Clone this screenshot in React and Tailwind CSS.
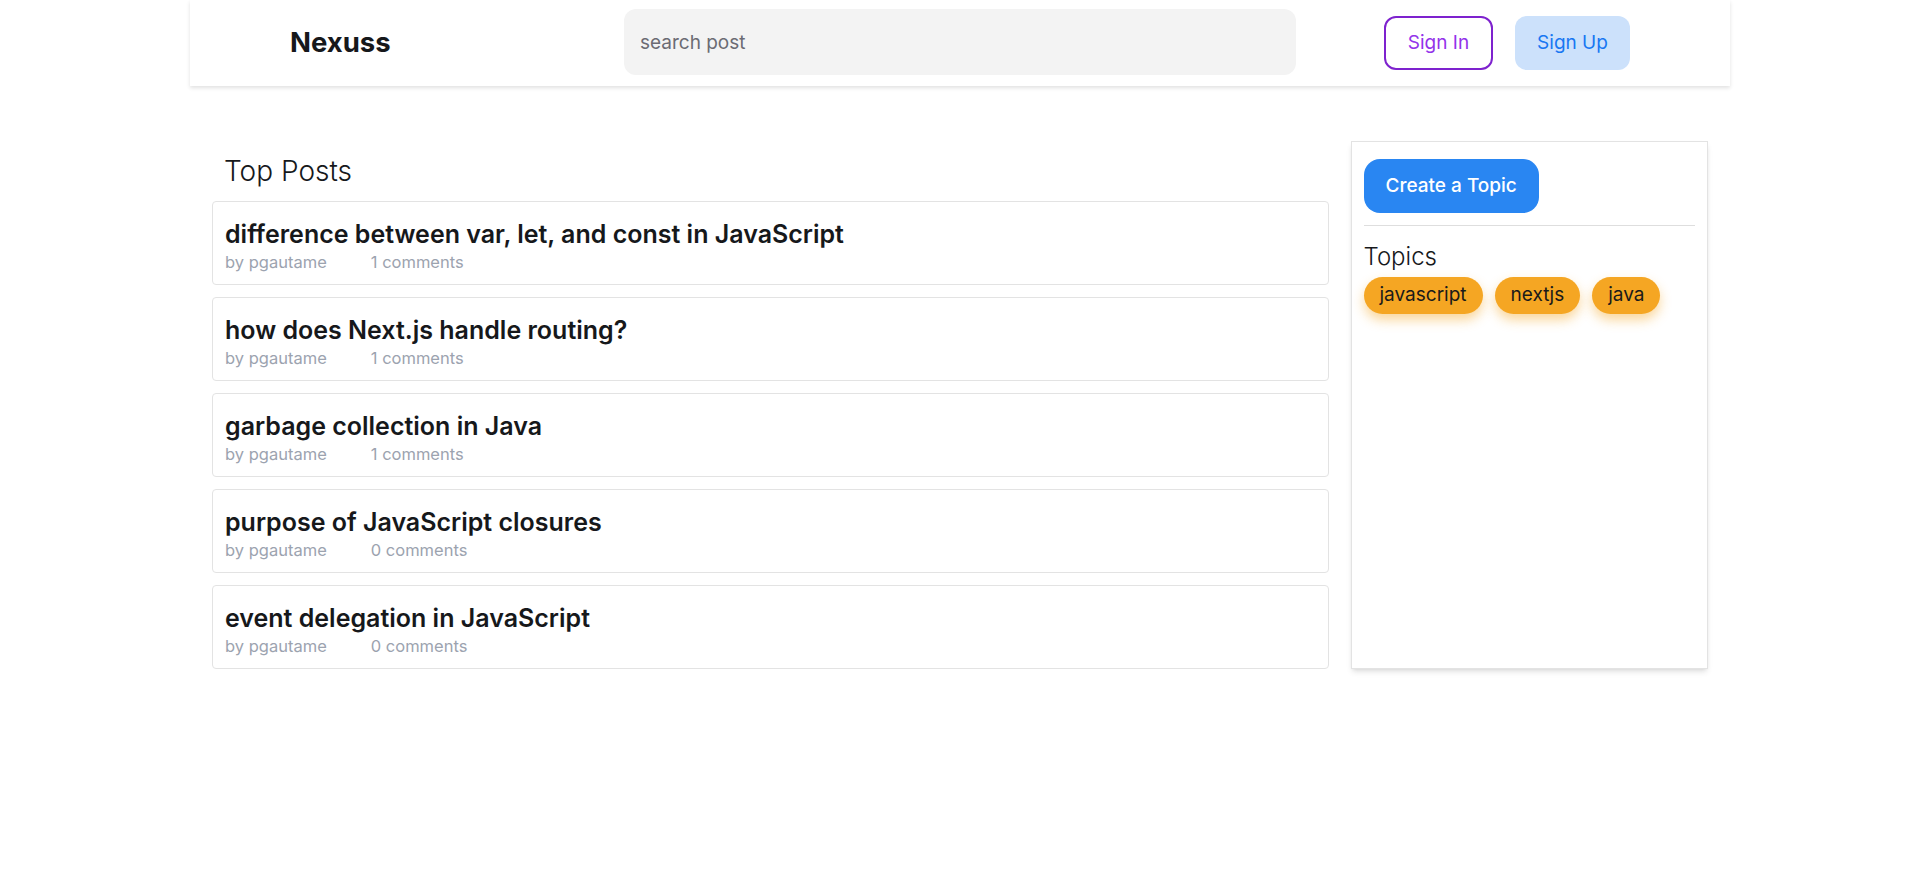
import React from 'react'

const posts = [
  { title: 'difference between var, let, and const in JavaScript', author: 'pgautame', comments: 1 },
  { title: 'how does Next.js handle routing?', author: 'pgautame', comments: 1 },
  { title: 'garbage collection in Java', author: 'pgautame', comments: 1 },
  { title: 'purpose of JavaScript closures', author: 'pgautame', comments: 0 },
  { title: 'event delegation in JavaScript', author: 'pgautame', comments: 0 },
]

const topics = ['javascript', 'nextjs', 'java']

const Header = () => (
  <div className="mx-[190px] h-[86px] bg-white shadow-[0_2px_4px_rgba(0,0,0,0.12)] px-[100px] grid grid-cols-[1fr_672px_1fr] items-center">
    <div className="text-[27.5px] font-bold text-[#16181b]">Nexuss</div>
    <input
      placeholder="search post"
      className="h-[66px] -mt-[2px] w-full rounded-xl bg-[#f3f3f3] px-4 text-[19px] text-gray-700 placeholder:text-[#6b6b73] outline-none"
    />
    <div className="flex justify-end gap-[22px]">
      <button className="h-[54px] w-[109px] rounded-xl border-2 border-[#7e22ce] text-[19px] text-[#9333ea]">
        Sign In
      </button>
      <button className="h-[54px] w-[115px] rounded-xl bg-[#cce1fb] text-[19px] text-[#1877f2]">
        Sign Up
      </button>
    </div>
  </div>
)

const PostCard = ({ post }) => (
  <div className="rounded-[4px] border border-[#e3e3e3] px-3 pt-4 pb-[10px]">
    <h2 className="text-[25px] leading-8 font-semibold text-[#16181b]">{post.title}</h2>
    <div className="flex gap-[44px] text-[16.5px] leading-6 text-[#9ca3af]">
      <span>by {post.author}</span>
      <span>{post.comments} comments</span>
    </div>
  </div>
)

export default function App() {
  return (
    <div className="min-h-screen bg-white font-['Inter',sans-serif]">
      <Header />
      <div className="mx-[190px] mt-[55px] px-[22px] grid grid-cols-4 gap-[22px]">
        <div className="col-span-3">
          <h1 className="p-3 text-[28px] leading-9 font-light text-[#16181b]">Top Posts</h1>
          <div className="flex flex-col gap-3">
            {posts.map((p) => (
              <PostCard key={p.title} post={p} />
            ))}
          </div>
        </div>
        <div className="border border-[#e3e3e3] shadow-md px-3 pt-[17px]">
          <button className="h-[54px] rounded-2xl bg-[#2986f2] px-[22px] text-[19px] font-medium text-white">
            Create a Topic
          </button>
          <div className="my-3 h-px bg-[#dedede]" />
          <h3 className="mt-[15px] text-[24px] leading-8 font-light text-[#16181b]">Topics</h3>
          <div className="flex gap-3 mt-[4px]">
            {topics.map((t) => (
              <span
                key={t}
                className="h-[37px] flex items-center rounded-full bg-[#f5a623] px-4 text-[19px] text-[#1a1a1a] shadow-[0_6px_12px_rgba(245,166,35,0.45)]"
              >
                {t}
              </span>
            ))}
          </div>
        </div>
      </div>
    </div>
  )
}
